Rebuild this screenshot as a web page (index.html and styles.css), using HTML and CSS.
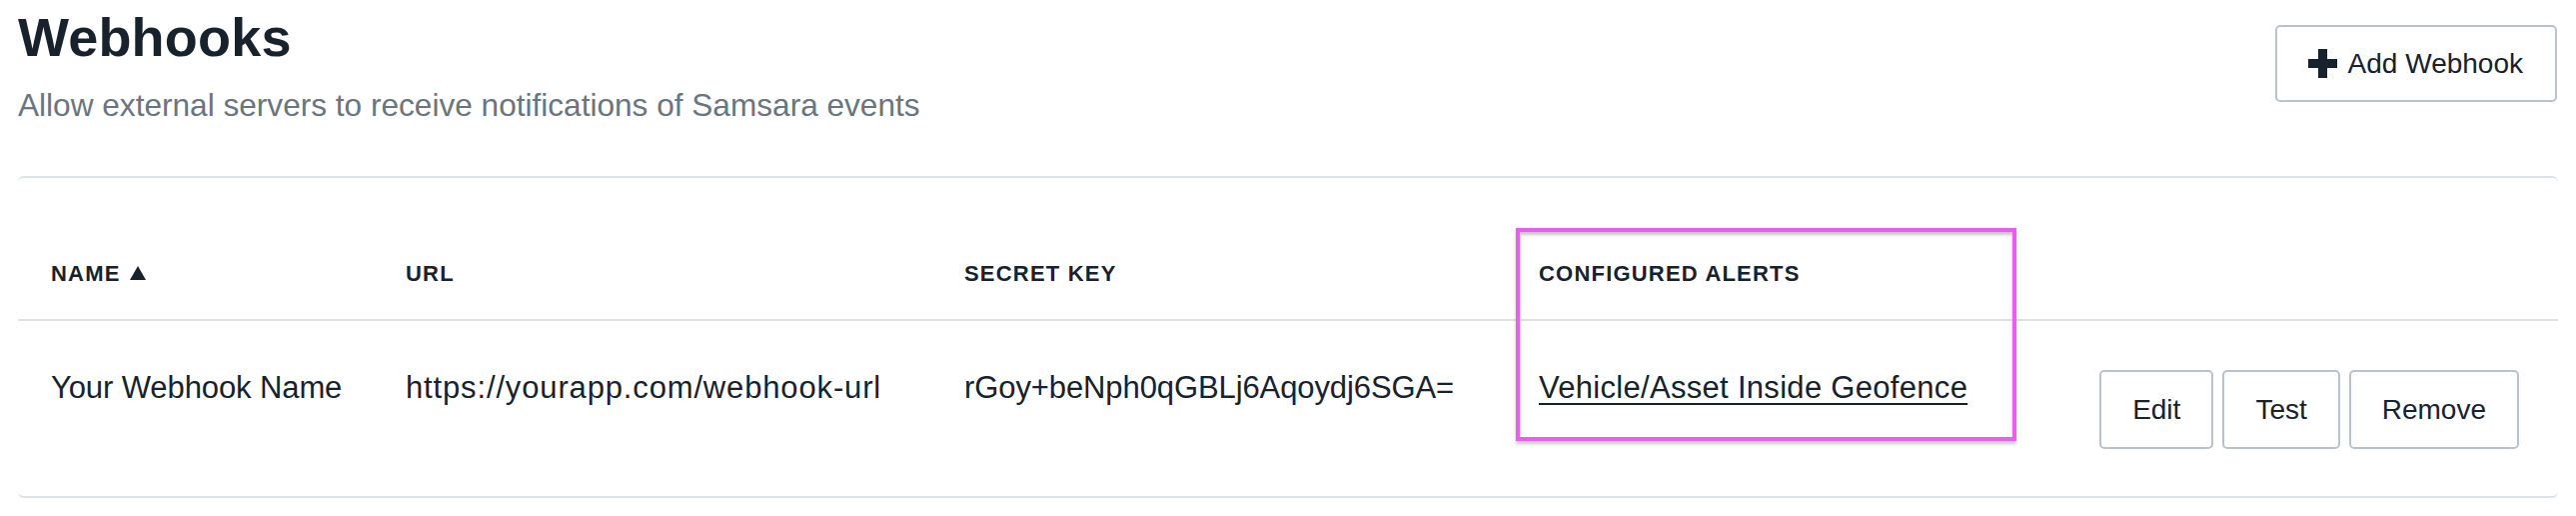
FILE: index.html
```html
<!DOCTYPE html>
<html lang="en">
<head>
<meta charset="utf-8">
<title>Webhooks</title>
<link rel="stylesheet" href="styles.css">
</head>
<body>
<div class="page">
  <header class="page-head">
    <div class="titles">
      <h1 class="title">Webhooks</h1>
      <p class="subtitle">Allow external servers to receive notifications of Samsara events</p>
    </div>
    <button class="btn btn-add" type="button">
      <svg class="plus" width="29" height="29" viewBox="0 0 29 29" aria-hidden="true"><rect x="10" y="0" width="9" height="29"/><rect x="0" y="10" width="29" height="9"/></svg>
      <span>Add Webhook</span>
    </button>
  </header>

  <section class="card">
    <div class="row head-row">
      <div class="th">NAME <svg class="sort" width="16" height="14" viewBox="0 0 16 14" aria-hidden="true"><polygon points="8,0 16,14 0,14"/></svg></div>
      <div class="th">URL</div>
      <div class="th">SECRET KEY</div>
      <div class="th">CONFIGURED ALERTS</div>
      <div class="th"></div>
    </div>
    <div class="row data-row">
      <div class="td td-name">Your Webhook Name</div>
      <div class="td td-url">https://yourapp.com/webhook-url</div>
      <div class="td td-key">rGoy+beNph0qGBLj6Aqoydj6SGA=</div>
      <div class="td td-alerts"><a class="alert-link" href="#">Vehicle/Asset Inside Geofence</a></div>
      <div class="actions">
        <button class="btn btn-act" type="button">Edit</button>
        <button class="btn btn-act" type="button">Test</button>
        <button class="btn btn-act" type="button">Remove</button>
      </div>
    </div>
    <div class="highlight"></div>
  </section>
</div>
</body>
</html>
```

FILE: styles.css
```css
* { box-sizing: border-box; }

html, body {
  margin: 0;
  padding: 0;
  background: #ffffff;
}

body {
  font-family: "Liberation Sans", Arial, sans-serif;
  color: #17222d;
}

.page {
  padding: 0 18px 0 18px;
}

.page-head {
  display: flex;
  justify-content: space-between;
  align-items: flex-start;
}

.titles {
  padding-top: 5px;
}

.title {
  margin: 0;
  font-size: 54px;
  line-height: 64px;
  font-weight: 700;
  color: #17222d;
  letter-spacing: 0.2px;
}

.subtitle {
  margin: 16px 0 0 0;
  font-size: 31.6px;
  line-height: 40px;
  color: #69757f;
}

.btn {
  font-family: "Liberation Sans", Arial, sans-serif;
  background: #ffffff;
  border: 2px solid #b9c3cb;
  border-radius: 5px;
  color: #17222d;
  font-size: 28px;
  cursor: pointer;
}

.btn-add {
  margin-top: 25px;
  margin-right: 1px;
  height: 77px;
  display: inline-flex;
  align-items: center;
  gap: 11px;
  padding: 0 32px 0 31px;
}

.plus { fill: #17222d; display: block; }

.card {
  position: relative;
  margin-top: 51px;
  border-top: 2px solid #dde2e6;
  border-bottom: 2px solid #dde2e6;
  border-radius: 6px;
}

.row {
  display: grid;
  grid-template-columns: 355px 559px 575px 1fr auto;
  padding: 0 39px 0 33px;
}

.head-row {
  border-bottom: 2px solid #dde2e6;
  padding-top: 81px;
  padding-bottom: 30px;
}

.th {
  font-size: 22px;
  line-height: 30px;
  font-weight: 700;
  letter-spacing: 1.2px;
  color: #17222d;
  display: flex;
  align-items: center;
  gap: 8px;
}

.sort { fill: #17222d; display: block; margin-top: -2px; margin-left: 1px; }

.data-row {
  min-height: 175px;
  align-items: start;
}

.td {
  padding-top: 47px;
  font-size: 31px;
  line-height: 40px;
  color: #17222d;
}

.td-name { letter-spacing: -0.1px; }
.td-url { letter-spacing: 0.85px; }
.td-key { letter-spacing: -0.1px; }
.td-alerts { letter-spacing: 0.3px; }

.alert-link {
  color: #17222d;
  text-decoration: underline;
  text-decoration-thickness: 2px;
  text-underline-offset: 5px;
}

.actions {
  align-self: center;
  display: flex;
  gap: 9px;
  padding-top: 2px;
}

.btn-act {
  height: 79px;
  padding: 0 31px;
  display: inline-flex;
  align-items: center;
}

.highlight {
  position: absolute;
  left: 1499px;
  top: 50px;
  width: 501px;
  height: 213px;
  border: 4px solid #ec5cf1;
  box-shadow: 0 3px 3px rgba(0, 0, 0, 0.22), inset 0 3px 3px rgba(0, 0, 0, 0.22);
  pointer-events: none;
}
```
